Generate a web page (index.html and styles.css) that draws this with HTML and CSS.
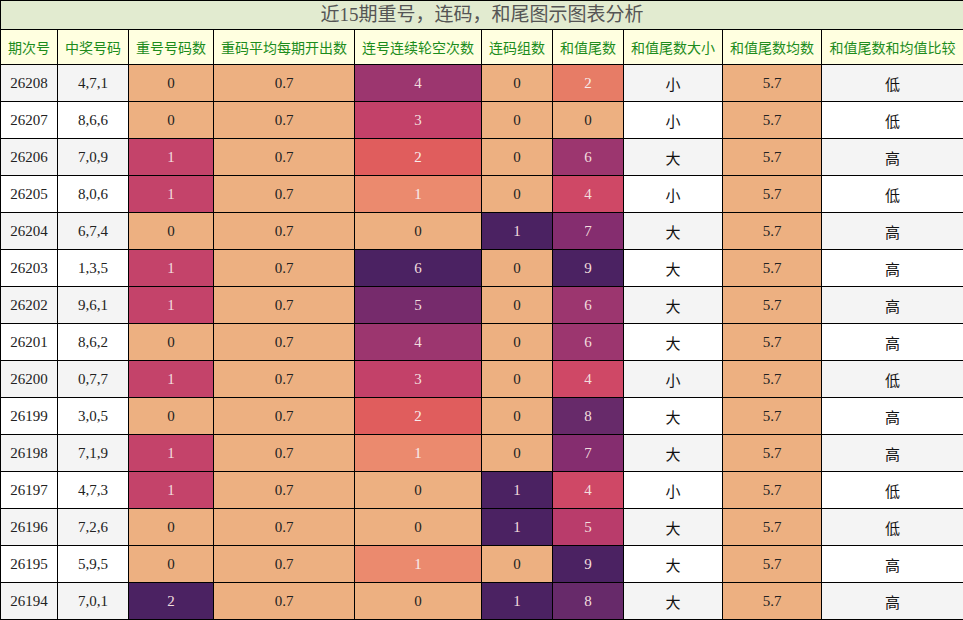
FILE: index.html
```html
<!DOCTYPE html>
<html lang="zh">
<head>
<meta charset="utf-8">
<title>近15期重号，连码，和尾图示图表分析</title>
<link rel="stylesheet" href="styles.css">
</head>
<body>
<table class="chart">
<colgroup>
<col class="c1"><col class="c2"><col class="c3"><col class="c4"><col class="c5"><col class="c6"><col class="c7"><col class="c8"><col class="c9"><col class="c10">
</colgroup>
<thead>
<tr class="title-row"><th colspan="10">近15期重号，连码，和尾图示图表分析</th></tr>
<tr class="head-row">
<th>期次号</th><th>中奖号码</th><th>重号号码数</th><th>重码平均每期开出数</th><th>连号连续轮空次数</th><th>连码组数</th><th>和值尾数</th><th>和值尾数大小</th><th>和值尾数均数</th><th>和值尾数和均值比较</th>
</tr>
</thead>
<tbody>
<tr class="odd"><td>26208</td><td>4,7,1</td><td class="p0">0</td><td class="p0">0.7</td><td class="l4">4</td><td class="p0">0</td><td class="s2">2</td><td class="cj">小</td><td class="p0">5.7</td><td class="cj">低</td></tr>
<tr><td>26207</td><td>8,6,6</td><td class="p0">0</td><td class="p0">0.7</td><td class="l3">3</td><td class="p0">0</td><td class="p0">0</td><td class="cj">小</td><td class="p0">5.7</td><td class="cj">低</td></tr>
<tr class="odd"><td>26206</td><td>7,0,9</td><td class="r1">1</td><td class="p0">0.7</td><td class="l2">2</td><td class="p0">0</td><td class="s6">6</td><td class="cj">大</td><td class="p0">5.7</td><td class="cj">高</td></tr>
<tr><td>26205</td><td>8,0,6</td><td class="r1">1</td><td class="p0">0.7</td><td class="l1">1</td><td class="p0">0</td><td class="s4">4</td><td class="cj">小</td><td class="p0">5.7</td><td class="cj">低</td></tr>
<tr class="odd"><td>26204</td><td>6,7,4</td><td class="p0">0</td><td class="p0">0.7</td><td class="p0">0</td><td class="dk">1</td><td class="s7">7</td><td class="cj">大</td><td class="p0">5.7</td><td class="cj">高</td></tr>
<tr><td>26203</td><td>1,3,5</td><td class="r1">1</td><td class="p0">0.7</td><td class="dk">6</td><td class="p0">0</td><td class="dk">9</td><td class="cj">大</td><td class="p0">5.7</td><td class="cj">高</td></tr>
<tr class="odd"><td>26202</td><td>9,6,1</td><td class="r1">1</td><td class="p0">0.7</td><td class="l5">5</td><td class="p0">0</td><td class="s6">6</td><td class="cj">大</td><td class="p0">5.7</td><td class="cj">高</td></tr>
<tr><td>26201</td><td>8,6,2</td><td class="p0">0</td><td class="p0">0.7</td><td class="l4">4</td><td class="p0">0</td><td class="s6">6</td><td class="cj">大</td><td class="p0">5.7</td><td class="cj">高</td></tr>
<tr class="odd"><td>26200</td><td>0,7,7</td><td class="r1">1</td><td class="p0">0.7</td><td class="l3">3</td><td class="p0">0</td><td class="s4">4</td><td class="cj">小</td><td class="p0">5.7</td><td class="cj">低</td></tr>
<tr><td>26199</td><td>3,0,5</td><td class="p0">0</td><td class="p0">0.7</td><td class="l2">2</td><td class="p0">0</td><td class="s8">8</td><td class="cj">大</td><td class="p0">5.7</td><td class="cj">高</td></tr>
<tr class="odd"><td>26198</td><td>7,1,9</td><td class="r1">1</td><td class="p0">0.7</td><td class="l1">1</td><td class="p0">0</td><td class="s7">7</td><td class="cj">大</td><td class="p0">5.7</td><td class="cj">高</td></tr>
<tr><td>26197</td><td>4,7,3</td><td class="r1">1</td><td class="p0">0.7</td><td class="p0">0</td><td class="dk">1</td><td class="s4">4</td><td class="cj">小</td><td class="p0">5.7</td><td class="cj">低</td></tr>
<tr class="odd"><td>26196</td><td>7,2,6</td><td class="p0">0</td><td class="p0">0.7</td><td class="p0">0</td><td class="dk">1</td><td class="s5">5</td><td class="cj">大</td><td class="p0">5.7</td><td class="cj">低</td></tr>
<tr><td>26195</td><td>5,9,5</td><td class="p0">0</td><td class="p0">0.7</td><td class="l1">1</td><td class="p0">0</td><td class="dk">9</td><td class="cj">大</td><td class="p0">5.7</td><td class="cj">高</td></tr>
<tr class="odd"><td>26194</td><td>7,0,1</td><td class="dk">2</td><td class="p0">0.7</td><td class="p0">0</td><td class="dk">1</td><td class="s8">8</td><td class="cj">大</td><td class="p0">5.7</td><td class="cj">高</td></tr>
</tbody>
</table>
</body>
</html>
```
FILE: styles.css
```css
html, body {
  margin: 0;
  padding: 0;
  background: #ffffff;
}
.chart {
  border-collapse: collapse;
  table-layout: fixed;
  width: 963px;
  font-family: "Liberation Serif", "Noto Sans CJK SC", serif;
  color: #222;
}
.c1 { width: 57px; }
.c2 { width: 71px; }
.c3 { width: 85px; }
.c4 { width: 141px; }
.c5 { width: 127px; }
.c6 { width: 71px; }
.c7 { width: 71px; }
.c8 { width: 99px; }
.c9 { width: 99px; }
.c10 { width: 142px; }
.chart th, .chart td {
  border: 1px solid #000;
  padding: 0;
  text-align: center;
}
.title-row th {
  height: 28px;
  background: #e2ebd0;
  color: #555;
  font-size: 19px;
  line-height: 26px;
  font-weight: normal;
  font-family: "Liberation Serif", "Noto Sans CJK SC", serif;
}
.head-row th {
  height: 34px;
  background: #ffffe0;
  color: #1c8c1c;
  font-size: 14px;
  line-height: 20px;
  font-weight: normal;
  font-family: "Noto Sans CJK SC", sans-serif;
}
.chart td {
  height: 36px;
  font-size: 15px;
  background: #ffffff;
}
.chart tr.odd td {
  background: #f4f4f4;
}
.chart td.cj {
  font-family: "Noto Sans CJK SC", sans-serif;
  color: #111;
}
.chart tr td.p0 { background: #edb081; color: #222; }
.chart tr td.r1 { background: #c4436a; color: #f2dede; }
.chart tr td.dk { background: #4b2262; color: #f2dede; }
.chart tr td.l1 { background: #eb8a6e; color: #f8ecec; }
.chart tr td.l2 { background: #e05d5d; color: #f8ecec; }
.chart tr td.l3 { background: #c34169; color: #f2dede; }
.chart tr td.l4 { background: #9c366f; color: #f2dede; }
.chart tr td.l5 { background: #762b6c; color: #f2dede; }
.chart tr td.s2 { background: #e77c66; color: #f8ecec; }
.chart tr td.s4 { background: #cf4866; color: #f2dede; }
.chart tr td.s5 { background: #b93c6b; color: #f2dede; }
.chart tr td.s6 { background: #9c366f; color: #f2dede; }
.chart tr td.s7 { background: #852d6f; color: #f2dede; }
.chart tr td.s8 { background: #672a6a; color: #f2dede; }
```
